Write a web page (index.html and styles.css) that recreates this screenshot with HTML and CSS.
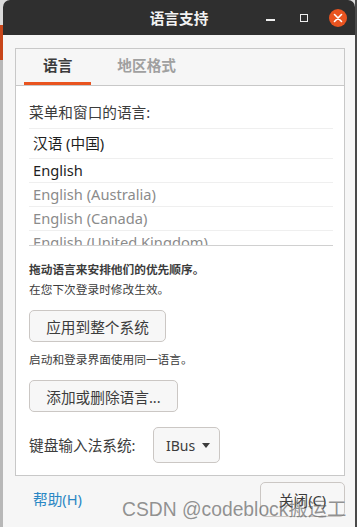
FILE: index.html
```html
<!DOCTYPE html>
<html lang="zh-CN">
<head>
    <meta charset="UTF-8">
    <meta name="viewport" content="width=device-width, initial-scale=1.0">
    <title>语言支持</title>
    <link rel="stylesheet" href="styles.css">
</head>
<body>
    <div class="window">
        <header class="titlebar">
            <div></div>
            <div class="title">语言支持</div>
            <div class="controls">
                <span class="ctl"><span class="ctl-min"></span></span>
                <span class="ctl"><span class="ctl-max"></span></span>
                <span class="ctl">
                    <span class="ctl-close">
                        <svg width="10" height="10" viewBox="0 0 10 10">
                            <path d="M1.5 1.5 L8.5 8.5 M8.5 1.5 L1.5 8.5" stroke="#fff" stroke-width="1.6" stroke-linecap="round"/>
                        </svg>
                    </span>
                </span>
            </div>
        </header>

        <div class="content">
            <div class="notebook">
                <div class="tabs">
                    <div class="tab active">语言</div>
                    <div class="tab">地区格式</div>
                </div>
                <div class="page">
                    <div class="label">菜单和窗口的语言:</div>
                    <div class="lang-list">
                        <div class="row first">汉语 (中国)</div>
                        <div class="row">English</div>
                        <div class="row dim">English (Australia)</div>
                        <div class="row dim">English (Canada)</div>
                        <div class="row dim">English (United Kingdom)</div>
                    </div>

                    <div class="note bold">拖动语言来安排他们的优先顺序。</div>
                    <div class="note">在您下次登录时修改生效。</div>

                    <button class="btn btn-apply">应用到整个系统</button>

                    <div class="note note-gap">启动和登录界面使用同一语言。</div>

                    <button class="btn btn-add">添加或删除语言...</button>

                    <div class="im-row">
                        <span class="label">键盘输入法系统:</span>
                        <button class="combo">IBus <span class="arrow"></span></button>
                    </div>
                </div>
            </div>

            <div class="footer">
                <a class="help">帮助(H)</a>
                <button class="btn btn-close">关闭(C)</button>
            </div>
        </div>

        <div class="watermark">CSDN @codeblock搬运工</div>
    </div>
</body>
</html>
```

FILE: styles.css
```css
html, body {
    margin: 0;
    height: 100%;
}
body {
    font-family: "Noto Sans", "Noto Sans CJK SC", sans-serif;
    font-size: 14.67px;
    color: #3c3c3c;
    background:
        linear-gradient(to right, transparent 0 355px, #4a4a4a 355px),
        linear-gradient(to bottom, #dadada 0 25px, #c8461a 25px 60px, #b8b8b8 60px);
    overflow: hidden;
}
.window {
    position: relative;
    margin-left: 3px;
    width: 352px;
    height: 100vh;
    background-color: #f6f6f6;
    border-radius: 7px 7px 0 0;
    overflow: hidden;
}

/* barra de título */
.titlebar {
    height: 35px;
    background-color: #2f2f2f;
    display: grid;
    grid-template-columns: 1fr auto 1fr;
    align-items: center;
}
.title {
    color: #f2f2f2;
    font-weight: bold;
    font-size: 14.67px;
}
.controls {
    display: flex;
    justify-content: flex-end;
    gap: 8px;
    padding-right: 4px;
}
.ctl {
    width: 26px;
    height: 26px;
    display: flex;
    align-items: center;
    justify-content: center;
}
.ctl-min {
    width: 9px;
    height: 2px;
    background-color: #eee;
    margin-top: 5px;
}
.ctl-max {
    width: 6px;
    height: 6px;
    border: 1.5px solid #eee;
}
.ctl-close {
    width: 18px;
    height: 18px;
    border-radius: 50%;
    background-color: #e95420;
    display: flex;
    align-items: center;
    justify-content: center;
}

/* conteúdo */
.content {
    padding: 13px 10px 0 12px;
}
.notebook {
    border: 1px solid #c8c8c8;
    background-color: #f6f6f6;
}
.tabs {
    display: flex;
    gap: 7px;
    padding-left: 8px;
    height: 36px;
    border-bottom: 1px solid #c8c8c8;
}
.tab {
    padding: 0 19px;
    line-height: 33px;
    font-weight: bold;
    color: #a0a0a0;
}
.tab.active {
    color: #3c3c3c;
    box-shadow: inset 0 -3px 0 #e95420;
}
.page {
    background-color: #fff;
    padding: 16px 11px 12px 13px;
}
.label {
    line-height: 20px;
}
.lang-list {
    margin-top: 6px;
    height: 116px;
    overflow: hidden;
    border-top: 1px solid #efefef;
    border-bottom: 1px solid #d0d0d0;
}
.row {
    padding-left: 4px;
    line-height: 23px;
    border-bottom: 1px solid #efefef;
    color: #1e1e1e;
}
.row.first {
    line-height: 29px;
}
.row.dim {
    color: #8b8b8b;
}
.note {
    font-size: 11.7px;
    line-height: 20px;
}
.note.bold {
    font-weight: bold;
    margin-top: 13px;
}
.note-gap {
    margin-top: 7px;
}
.btn {
    font-family: inherit;
    font-size: 14.67px;
    color: #3c3c3c;
    background-color: #f7f7f7;
    border: 1px solid #cbc7c4;
    border-radius: 5px;
    height: 32px;
    padding: 0 15px;
    display: block;
}
.btn-apply {
    margin-top: 11px;
    width: 137px;
}
.btn-add {
    margin-top: 11px;
    width: 149px;
}
.im-row {
    margin-top: 15px;
    display: flex;
    align-items: center;
    gap: 17px;
}
.combo {
    font-family: inherit;
    font-size: 14px;
    color: #3c3c3c;
    background-color: #f7f7f7;
    border: 1px solid #cbc7c4;
    border-radius: 5px;
    height: 36px;
    width: 67px;
    padding: 0 0 0 4px;
    display: flex;
    align-items: center;
    justify-content: center;
    gap: 7px;
}
.arrow {
    width: 0;
    height: 0;
    border-left: 4.5px solid transparent;
    border-right: 4.5px solid transparent;
    border-top: 5px solid #3c3c3c;
}

/* rodapé */
.footer {
    margin-top: 6px;
    display: flex;
    justify-content: space-between;
    align-items: center;
}
.help {
    color: #2a87c4;
    padding-left: 18px;
    margin-top: -3px;
}
.btn-close {
    width: 85px;
    height: 35px;
}

.watermark {
    position: absolute;
    left: 119px;
    top: 494px;
    font-family: "Liberation Sans", "Noto Sans CJK SC", sans-serif;
    font-size: 19.3px;
    color: rgba(100, 100, 100, 0.7);
    white-space: nowrap;
}
```
